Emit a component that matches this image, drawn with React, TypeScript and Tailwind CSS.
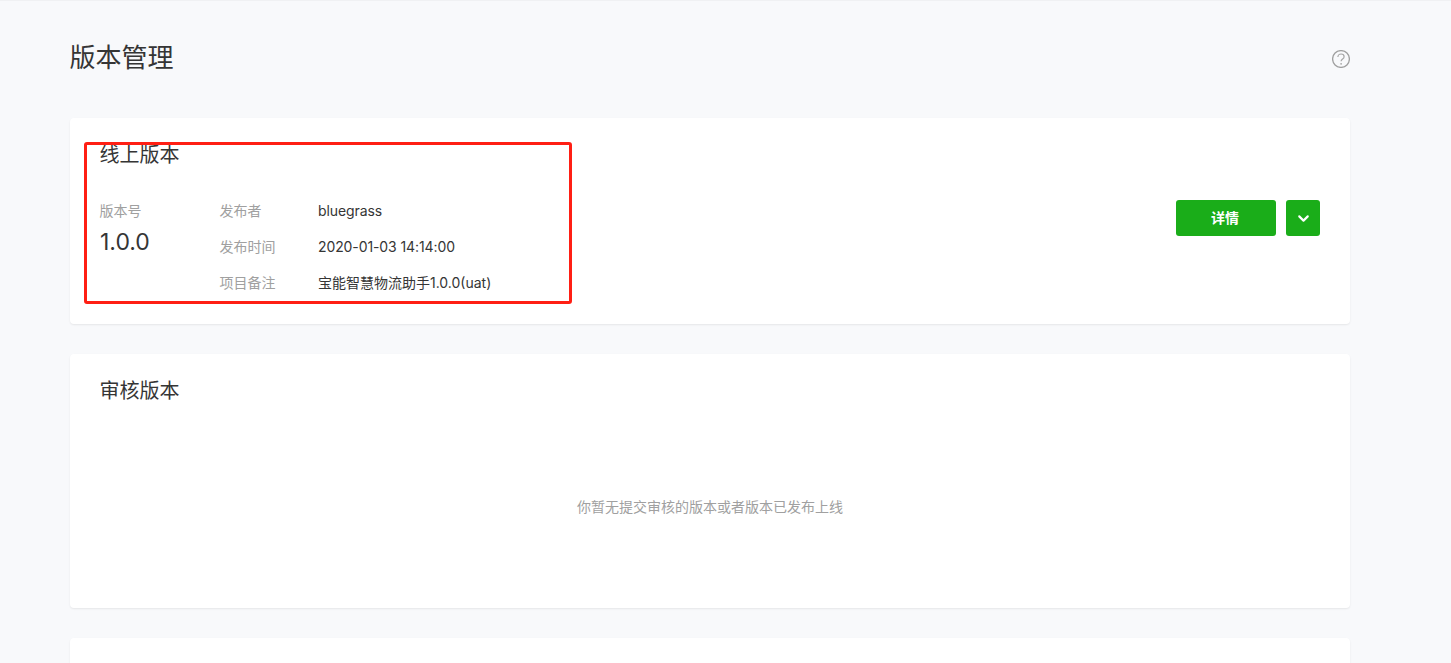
import { ChevronDown } from "lucide-react";

const font = "font-['Inter','Noto_Sans_CJK_SC',sans-serif]";

function InfoRow({ label, value, tight }: { label: string; value: string; tight?: boolean }) {
  return (
    <div className="flex h-[36px] items-center text-[14px]">
      <span className="-ml-[0.5px] w-[98.5px] text-[#a0a0a0]">{label}</span>
      <span className={tight ? "tracking-[-0.1px] text-[#353535]" : "text-[#353535]"}>{value}</span>
    </div>
  );
}

export default function App() {
  return (
    <div className={`${font} relative h-[663px] overflow-hidden border-t border-[#f0f1f3] bg-[#f8f9fb] pl-[70px] pr-[101px]`}>
      {/* Page header */}
      <div className="flex h-[117px] items-start justify-between pt-[38px]">
        <h1 className="-ml-[0.5px] text-[26px] leading-[38px] font-normal text-[#353535]">版本管理</h1>
        <svg className="mt-[11px]" width="18" height="18" viewBox="0 0 18 18" fill="none">
          <circle cx="9" cy="9" r="8.4" stroke="#a0a0a0" strokeWidth="1.3" />
          <path d="M5.9 7c0-1.8 1.3-3 3.2-3s3 1.2 3 2.7c0 2.3-3 2.3-3 4.6" stroke="#a6a6a6" strokeWidth="1.2" />
          <circle cx="9.1" cy="13.8" r=".9" fill="#a6a6a6" />
        </svg>
      </div>

      {/* Online version */}
      <section className="mb-[30px] flex h-[206px] justify-between rounded bg-white pl-[30px] pr-[30px] pt-[23px] shadow-[0_1px_2px_rgba(0,0,0,0.08)]">
        <div>
          <h2 className="-ml-[0.5px] text-[20px] leading-[28px] font-normal text-[#353535]">线上版本</h2>
          <div className="mt-[23px] flex">
            <div className="w-[120px]">
              <div className="-ml-[0.5px] flex h-[36px] items-center text-[14px] text-[#a0a0a0]">版本号</div>
              <div className="-mt-[1px] text-[23px] leading-[30px] text-[#353535]">1.0.0</div>
            </div>
            <div>
              <InfoRow label="发布者" value="bluegrass" tight />
              <InfoRow label="发布时间" value="2020-01-03 14:14:00" tight />
              <InfoRow label="项目备注" value="宝能智慧物流助手1.0.0(uat)" />
            </div>
          </div>
        </div>
        <div className="mt-[59px] flex items-start gap-[10px]">
          <button className="h-[36px] w-[100px] rounded-[3px] bg-[#1aad19] pb-[2px] pr-[2px] text-[14px] font-bold text-white">详情</button>
          <button className="flex h-[36px] w-[34px] items-center justify-center rounded-[3px] bg-[#1aad19] text-white">
            <ChevronDown size={17} strokeWidth={3} />
          </button>
        </div>
      </section>

      {/* Review version */}
      <section className="mb-[30px] flex h-[254px] flex-col rounded bg-white px-[30px] pt-[23px] shadow-[0_1px_2px_rgba(0,0,0,0.08)]">
        <h2 className="-ml-[0.5px] text-[20px] leading-[28px] font-normal text-[#353535]">审核版本</h2>
        <p className="mt-[92px] text-center text-[14px] leading-[20px] text-[#a0a0a0]">你暂无提交审核的版本或者版本已发布上线</p>
      </section>

      {/* Dev version, cut off by the fold */}
      <section className="h-[200px] rounded bg-white shadow-[0_1px_2px_rgba(0,0,0,0.08)]" />

      {/* Annotation drawn over the screenshot */}
      <div className="absolute left-[84px] top-[141px] h-[162px] w-[488px] rounded-[3px] border-[3px] border-[#ff1f14]" />
    </div>
  );
}
